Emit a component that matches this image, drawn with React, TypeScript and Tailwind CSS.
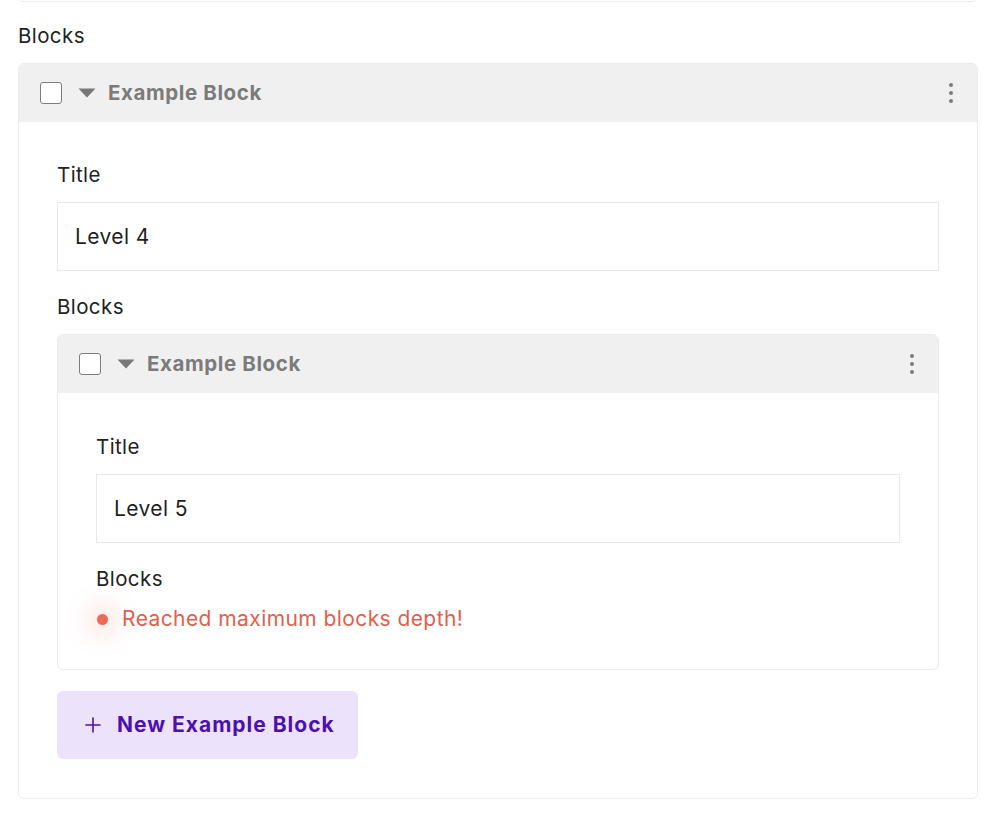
import { Plus } from "lucide-react";

const FONT = "font-['Inter','Noto_Sans',sans-serif]";

function Checkbox() {
  return <span className="w-[22px] h-[22px] rounded-[3px] border-[1.5px] border-[#7d7d7d] bg-white shrink-0" />;
}

function Caret() {
  return (
    <svg width="18" height="10" viewBox="0 0 18 10" className="shrink-0">
      <path d="M0.5 0.5 H17.5 L9 9.5 Z" fill="#777777" />
    </svg>
  );
}

function Kebab() {
  return (
    <button className="flex flex-col items-center gap-[4px] w-[8px]" aria-label="Block options">
      <span className="w-[4px] h-[4px] rounded-full bg-[#7a7a7a]" />
      <span className="w-[4px] h-[4px] rounded-full bg-[#7a7a7a]" />
      <span className="w-[4px] h-[4px] rounded-full bg-[#7a7a7a]" />
    </button>
  );
}

function BlockHeader({ label }: { label: string }) {
  return (
    <div className="h-[58px] bg-[#f0f0f0] flex items-center pl-[21px] pr-[22px]">
      <Checkbox />
      <span className="ml-[16px]"><Caret /></span>
      <span className="ml-[12px] text-[20.5px] tracking-[0.6px] font-bold text-[#7b7b7b] leading-none flex-1">{label}</span>
      <Kebab />
    </div>
  );
}

function TextField({ label, value }: { label: string; value: string }) {
  return (
    <div>
      <div className="text-[20.5px] tracking-[0.4px] leading-[28px] text-[#222] mb-[13px]">{label}</div>
      <div className="h-[69px] border border-[#e8e8e8] bg-white flex items-center px-[17px] text-[21px] tracking-[0.4px] text-[#1f1f1f]">
        {value}
      </div>
    </div>
  );
}

export default function App() {
  return (
    <div className={`${FONT} bg-white min-h-[815px] overflow-hidden`}>
      {/* tail of the field above */}
      <div className="-mt-[10px] ml-[18px] w-[960px] h-[12px] border border-[#ebebeb] rounded-[5px]" />

      <div className="ml-[18px] mt-[20px] text-[20.5px] tracking-[0.4px] leading-[28px] text-[#222]">Blocks</div>

      <div className="ml-[18px] mt-[13px] w-[960px] border border-[#ebebeb] rounded-[6px] overflow-hidden">
        <BlockHeader label="Example Block" />
        <div className="px-[38px] pt-[39px] pb-[39px]">
          <TextField label="Title" value="Level 4" />

          <div className="mt-[22px] text-[20.5px] tracking-[0.4px] leading-[28px] text-[#222]">Blocks</div>

          {/* nested block */}
          <div className="mt-[13px] border border-[#ebebeb] rounded-[6px] overflow-hidden">
            <BlockHeader label="Example Block" />
            <div className="px-[38px] pt-[40px] pb-[36px]">
              <TextField label="Title" value="Level 5" />
              <div className="mt-[22px] text-[20.5px] tracking-[0.4px] leading-[28px] text-[#222]">Blocks</div>
              <div className="mt-[12px] flex items-center h-[28px]">
                <span className="ml-[1px] w-[11px] h-[11px] rounded-full bg-[#ee6a55] shadow-[0_0_22px_12px_rgba(240,110,90,0.14)]" />
                <span className="ml-[14px] text-[21px] tracking-[0.42px] text-[#e2604b]">Reached maximum blocks depth!</span>
              </div>
            </div>
          </div>

          <button className="mt-[21px] h-[68px] w-[301px] rounded-[6px] bg-[#ece2fb] flex items-center pl-[24px] text-[#4d10b0]">
            <Plus className="w-[24px] h-[24px]" strokeWidth={1.6} />
            <span className="ml-[12px] text-[21px] tracking-[1px] font-bold">New Example Block</span>
          </button>
        </div>
      </div>
    </div>
  );
}
